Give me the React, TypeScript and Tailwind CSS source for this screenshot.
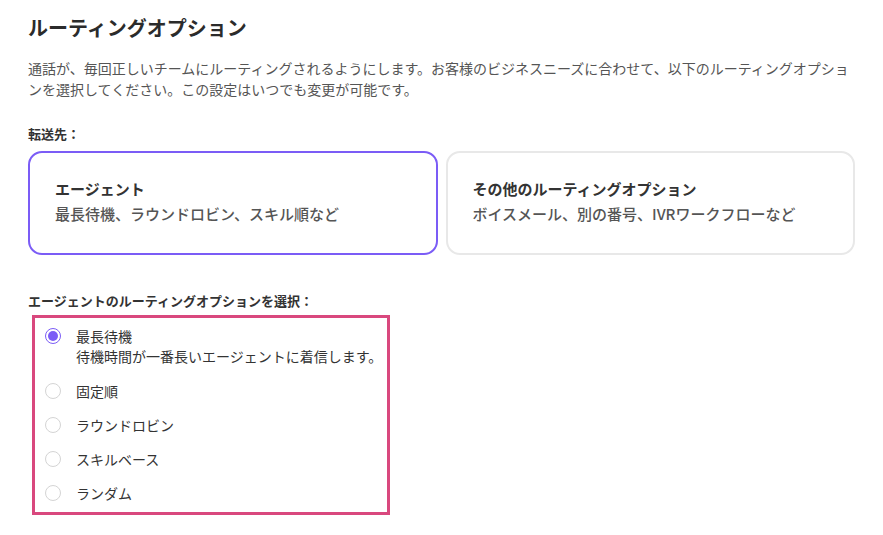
import React from "react";

const options = [
  { label: "最長待機", desc: "待機時間が一番長いエージェントに着信します。", checked: true },
  { label: "固定順" },
  { label: "ラウンドロビン" },
  { label: "スキルベース" },
  { label: "ランダム" },
];

function Radio({ checked }: { checked?: boolean }) {
  if (checked) {
    return (
      <span className="flex h-4 w-4 shrink-0 items-center justify-center rounded-full border-[1.5px] border-[#7b5cf6] bg-white">
        <span className="h-[10px] w-[10px] rounded-full bg-[#7b5cf6]" />
      </span>
    );
  }
  return <span className="block h-4 w-4 shrink-0 rounded-full border border-[#d4d4d4] bg-white" />;
}

export default function App() {
  return (
    <div
      className="h-[535px] w-[883px] bg-white px-7 pt-[14px] text-[#333]"
      style={{ fontFamily: '"Noto Sans CJK JP", "Noto Sans", sans-serif' }}
    >
      <h1 className="text-[20px] font-bold leading-[28px] text-[#2b2b2b]">ルーティングオプション</h1>
      <p className="mt-[16px] text-[14px] leading-[21px] text-[#555]">
        通話が、毎回正しいチームにルーティングされるようにします。お客様のビジネスニーズに合わせて、以下のルーティングオプションを選択してください。この設定はいつでも変更が可能です。
      </p>
      <div className="mt-[24px] text-[13px] font-bold leading-[20px] text-[#333]">転送先：</div>
      <div className="mt-[7px] grid grid-cols-2 gap-2">
        <div className="h-[104px] rounded-[14px] border-2 border-[#7b5cf6] bg-white pl-[25px] pt-[23px]">
          <div className="text-[15px] font-bold leading-[25px] text-[#333]">エージェント</div>
          <div className="text-[15px] font-medium leading-[25px] text-[#555]">最長待機、ラウンドロビン、スキル順など</div>
        </div>
        <div className="h-[104px] rounded-[14px] border-2 border-[#e8e8e8] bg-white pl-[25px] pt-[23px]">
          <div className="text-[15px] font-bold leading-[25px] text-[#333]">その他のルーティングオプション</div>
          <div className="text-[15px] font-medium leading-[25px] text-[#555]">ボイスメール、別の番号、IVRワークフローなど</div>
        </div>
      </div>
      <div className="mt-[36px] text-[13px] font-bold leading-[20px] text-[#333]">
        エージェントのルーティングオプションを選択：
      </div>
      <div className="ml-1 mt-[4px] flex w-[358px] flex-col border-[3px] border-[#d9487e] pb-[9px] pl-[10px] pt-[8px]">
        {options.map((o, i) => (
          <div key={o.label} className={`flex items-start gap-[15px] ${i === 0 ? "pb-[15px]" : i === options.length - 1 ? "" : "pb-[14px]"}`}>
            <div className="flex h-5 items-center">
              <Radio checked={o.checked} />
            </div>
            <div className="text-[14px] leading-[20px] text-[#333]">
              <div>{o.label}</div>
              {o.desc && <div>{o.desc}</div>}
            </div>
          </div>
        ))}
      </div>
    </div>
  );
}
